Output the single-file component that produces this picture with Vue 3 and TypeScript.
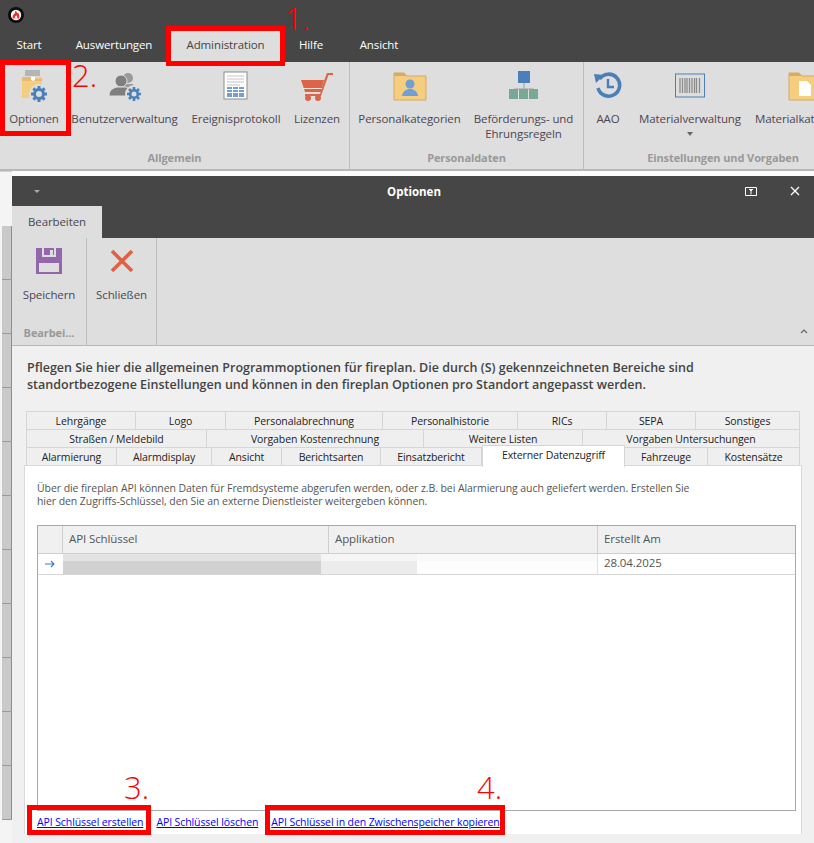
<template>
  <div class="page">
    <header class="topbar">
      <svg class="logo" width="16" height="16" viewBox="0 0 16 16">
        <circle cx="8" cy="8" r="8" fill="#0c0c0c" />
        <circle cx="8" cy="8" r="5.200" fill="#fff" />
        <path d="M4.800 11.500C4 8.800 5.500 7.800 6.500 6.800 7 5.600 7.300 4.800 7.600 3.500c1 1.200 1.300 2 1.700 2.800L10 5.500c1.300 2 1.800 3.800 1 6z" fill="#e8302a" />
        <path d="M6.800 11.500C6.500 10 7.400 9.500 8.300 8.300c.8 1.100 1.200 2 .9 3.200z" fill="#fff" />
      </svg>
      <nav class="menu">
        <div v-for="t in menuTabs" :key="t" class="menu-tab" :class="{ active: t === 'Administration' }">{{ t }}</div>
      </nav>
    </header>

    <section class="ribbon">
      <div class="rb-group g1">
        <div class="rb-items">
          <div class="rb-item" style="width: 68px">
            <svg class="ic" width="36" height="32" viewBox="0 0 36 32">
              <path d="M9 1h15M9 3h15M9 5h15" stroke="#8d8d8d" stroke-width="1" />
              <path d="M6 7h20v21H6z" fill="#f5cd7e" />
              <path d="M6 7h8l2 2h10v2H6z" fill="#e6bb6b" />
              <path d="M15 7h4v3l-2 1-2-1z" fill="#fff" />
              <circle cx="23" cy="24" r="10" fill="#dedede" />
              <g fill="none" stroke="#4a7fb9">
                <circle cx="23" cy="24" r="4.500" stroke-width="3" />
                <path d="M23 16v3M23 29v3M15 24h3M28 24h3M17.400 18.400l2.100 2.100M26.500 27.500l2.100 2.100M28.600 18.400l-2.100 2.100M19.500 27.500l-2.100 2.100" stroke-width="3" />
              </g>
            </svg>
            <span>Optionen</span>
          </div>
          <div class="rb-item" style="width: 113px">
            <svg class="ic" width="36" height="32" viewBox="0 0 36 32">
              <circle cx="21" cy="8" r="5" fill="#9a9a9a" />
              <path d="M16 14h10l4 6v4H18z" fill="#9a9a9a" />
              <circle cx="14" cy="11" r="6" fill="#7f7f7f" stroke="#dedede" />
              <path d="M2 26c0-6 4-8 8-9h8c4 1 7 3 8 9z" fill="#7f7f7f" stroke="#dedede" />
              <circle cx="27" cy="24" r="9" fill="#dedede" />
              <g fill="none" stroke="#4a7fb9">
                <circle cx="27" cy="24" r="3.800" stroke-width="2.600" />
                <path d="M27 17v2.500M27 28.500v2.500M20 24h2.500M31.500 24h2.500M22 19l1.800 1.800M30.200 27.200l1.800 1.800M32 19l-1.800 1.800M23.800 27.200L22 29" stroke-width="2.600" />
              </g>
            </svg>
            <span>Benutzerverwaltung</span>
          </div>
          <div class="rb-item" style="width: 110px">
            <svg class="ic" width="26" height="30" viewBox="0 0 26 30">
              <rect x="1" y="1" width="23" height="27" fill="#fff" stroke="#8c8c8c" />
              <path d="M4 5h17M4 8h17M4 11h17M4 14h13" stroke="#c4c4c4" />
              <path d="M4 17h17M4 20h17M4 23h17M4 25h17" stroke="#4a7fb9" stroke-width="1.600" />
              <path d="M9.500 16v10M15.500 16v10" stroke="#fff" />
            </svg>
            <span>Ereignisprotokoll</span>
          </div>
          <div class="rb-item" style="width: 52px">
            <svg class="ic" width="34" height="30" viewBox="0 0 34 30">
              <path d="M1 9h23l-3 12H5z" fill="#dd6547" />
              <path d="M24 10l3-8h6v2h-4.500L21 25H5v-2h15z" fill="#dd6547" />
              <rect x="3" y="17" width="19" height="1" fill="#fff" opacity=".8" />
              <circle cx="8" cy="27" r="3" fill="#dd6547" />
              <circle cx="18" cy="27" r="3" fill="#dd6547" />
            </svg>
            <span>Lizenzen</span>
          </div>
        </div>
        <div class="rb-label">Allgemein</div>
      </div>

      <div class="rb-group g2">
        <div class="rb-items pad">
          <div class="rb-item" style="width: 109px">
            <svg class="ic" width="34" height="30" viewBox="0 0 34 30">
              <path d="M1 2h10l3 3h19v24H1z" fill="#f5cd7e" stroke="#d6ab62" />
              <path d="M1 2h10l3 3H1z" fill="#d6ab62" />
              <circle cx="17" cy="13" r="4.500" fill="#6e9fd6" />
              <path d="M9 25c1-5 4-7 8-7s7 2 8 7z" fill="#6e9fd6" />
            </svg>
            <span>Personalkategorien</span>
          </div>
          <div class="rb-item" style="width: 119px">
            <svg class="ic" width="30" height="30" viewBox="0 0 30 30">
              <rect x="9" y="0" width="12" height="12" fill="#4a7fb9" />
              <path d="M15 12v6M5 21v-3h20v3M15 18v3" fill="none" stroke="#a0a0a0" />
              <rect x="0" y="18" width="9" height="10" fill="#78a896" />
              <rect x="10" y="18" width="9" height="10" fill="#78a896" />
              <rect x="20" y="18" width="9" height="10" fill="#78a896" />
            </svg>
            <span>Beförderungs- und<br />Ehrungsregeln</span>
          </div>
        </div>
        <div class="rb-label">Personaldaten</div>
      </div>

      <div class="rb-group g3">
        <div class="rb-items">
          <div class="rb-item" style="width: 48px">
            <svg class="ic" width="28" height="30" viewBox="0 0 28 30">
              <path d="M5.500 8a11 11 0 1 1-1.500 9" fill="none" stroke="#4a7fb9" stroke-width="3.600" />
              <path d="M0 3l10 1-8 8z" fill="#4a7fb9" />
              <path d="M14 8v8h6" fill="none" stroke="#4a7fb9" stroke-width="2.400" />
            </svg>
            <span>AAO</span>
          </div>
          <div class="rb-item" style="width: 116px">
            <svg class="ic" width="30" height="30" viewBox="0 0 30 30">
              <rect x=".5" y="3" width="29" height="23" fill="none" stroke="#4a7fb9" />
              <path d="M5 7v15M7.500 7v15M10 7v15M12 7v15M14.500 7v15M17 7v15M19.500 7v15M21.500 7v15M24.500 7v15" stroke="#8c8c8c" stroke-width="1.300" />
            </svg>
            <span>Materialverwaltung</span>
            <i class="caret"></i>
          </div>
          <div class="rb-item clip">
            <svg class="ic" width="34" height="30" viewBox="0 0 34 30">
              <path d="M1 2h10l3 3h19v24H1z" fill="#f5cd7e" stroke="#d6ab62" />
              <path d="M1 2h10l3 3H1z" fill="#d6ab62" />
              <path d="M11 10h8l4 4v11H11z" fill="#fff" />
            </svg>
            <span>Materialkategorien</span>
          </div>
        </div>
        <div class="rb-label">Einstellungen und Vorgaben</div>
      </div>
    </section>

    <div class="workspace">
      <aside class="backdrop">
        <div v-for="n in 11" :key="n" class="back-row"></div>
      </aside>

      <main class="window">
        <div class="win-head">
          <div class="win-title">
            <i class="win-caret"></i>
            <b>Optionen</b>
            <svg class="win-max" width="12" height="9" viewBox="0 0 12 9">
              <path d="M.5.5h11v8H.5z" fill="none" stroke="#fff" />
              <path d="M4 2.500h4M6 2.500v5M5 3.500h2" stroke="#fff" />
            </svg>
            <svg class="win-close" width="10" height="10" viewBox="0 0 10 10">
              <path d="M1 1l8 8M9 1L1 9" stroke="#fff" stroke-width="1.300" />
            </svg>
          </div>
          <div class="win-tab">Bearbeiten</div>
        </div>

        <div class="win-ribbon">
          <div class="wr-group wr1">
            <div class="rb-item wr-item">
              <svg class="ic" width="26" height="26" viewBox="0 0 26 26">
                <path d="M0 0h26v26H0z" fill="#9467ad" />
                <rect x="3" y="15" width="20" height="9" fill="#dedede" />
                <rect x="6" y="0" width="14" height="9" fill="#dedede" />
                <rect x="8" y="0" width="10" height="7" fill="#9467ad" />
                <rect x="14" y="2" width="3" height="5" fill="#dedede" />
              </svg>
              <span>Speichern</span>
            </div>
            <div class="rb-label">Bearbei...</div>
          </div>
          <div class="wr-group wr2">
            <div class="rb-item wr-item">
              <svg class="ic" width="26" height="26" viewBox="0 0 26 26">
                <path d="M3 3l20 20M23 3L3 23" stroke="#df6243" stroke-width="3.600" />
              </svg>
              <span>Schließen</span>
            </div>
          </div>
          <svg class="collapse" width="8" height="5" viewBox="0 0 8 5"><path d="M1 4l3-3 3 3" fill="none" stroke="#666" stroke-width="1.200" /></svg>
        </div>

        <div class="win-body">
          <p class="intro">
            Pflegen Sie hier die allgemeinen Programmoptionen für fireplan. Die durch (S) gekennzeichneten Bereiche sind<br />
            standortbezogene Einstellungen und können in den fireplan Optionen pro Standort angepasst werden.
          </p>

          <div class="tabs">
            <div v-for="(row, i) in tabRows" :key="i" class="tab-row" :style="{ gridTemplateColumns: row.cols }">
              <div v-for="t in row.items" :key="t" class="tab" :class="{ on: t === 'Externer Datenzugriff' }">{{ t }}</div>
            </div>
          </div>

          <div class="panel">
            <p class="desc">
              Über die fireplan API können Daten für Fremdsysteme abgerufen werden, oder z.B. bei Alarmierung auch geliefert werden. Erstellen Sie<br />
              hier den Zugriffs-Schlüssel, den Sie an externe Dienstleister weitergeben können.
            </p>

            <div class="grid">
              <div class="g-head">
                <div></div>
                <div>API Schlüssel</div>
                <div>Applikation</div>
                <div>Erstellt Am</div>
              </div>
              <div class="g-row">
                <div class="g-arrow">
                  <svg width="10" height="8" viewBox="0 0 10 8"><path d="M0 4h9M6 1l3 3-3 3" fill="none" stroke="#3a78cf" stroke-width="1.100" /></svg>
                </div>
                <div class="g-key">
                  <i class="blur b1"></i><i class="blur b2"></i><i class="blur b3"></i>
                </div>
                <div class="g-date">28.04.2025</div>
              </div>
            </div>

            <div class="links">
              <a>API Schlüssel erstellen</a>
              <a>API Schlüssel löschen</a>
              <a>API Schlüssel in den Zwischenspeicher kopieren</a>
            </div>
          </div>
        </div>
      </main>
    </div>

    <!-- rote Markierungen liegen ueber dem Screenshot -->
    <div class="mark" style="left: 166px; top: 26px; width: 119px; height: 40px"></div>
    <div class="mark" style="left: 0; top: 60px; width: 71px; height: 76px"></div>
    <div class="mark" style="left: 27px; top: 805px; width: 124px; height: 30px"></div>
    <div class="mark" style="left: 265px; top: 805px; width: 240px; height: 30px"></div>
    <span class="num" style="left: 285px; top: 3px">1.</span>
    <span class="num" style="left: 72px; top: 60px">2.</span>
    <span class="num" style="left: 124px; top: 772px">3.</span>
    <span class="num" style="left: 477px; top: 772px">4.</span>
  </div>
</template>

<script setup lang="ts">
interface TabRow {
  cols: string
  items: string[]
}

const menuTabs = ['Start', 'Auswertungen', 'Administration', 'Hilfe', 'Ansicht']

// Spaltenbreiten wie im Original, die Reiter fuellen jede Zeile ganz aus
const tabRows: TabRow[] = [
  {
    cols: '110px 90px 157px 135px 89px 89px 104px',
    items: ['Lehrgänge', 'Logo', 'Personalabrechnung', 'Personalhistorie', 'RICs', 'SEPA', 'Sonstiges']
  },
  {
    cols: '181px 217px 159px 217px',
    items: ['Straßen / Meldebild', 'Vorgaben Kostenrechnung', 'Weitere Listen', 'Vorgaben Untersuchungen']
  },
  {
    cols: '91px 95px 70px 99px 101px 143px 83px 92px',
    items: ['Alarmierung', 'Alarmdisplay', 'Ansicht', 'Berichtsarten', 'Einsatzbericht', 'Externer Datenzugriff', 'Fahrzeuge', 'Kostensätze']
  }
]
</script>

<style>
html,
body {
  margin: 0;
  background: #f0f0f0;
}
</style>

<style scoped>
.page {
  position: relative;
  width: 814px;
  height: 843px;
  overflow: hidden;
  display: flex;
  flex-direction: column;
  font-family: "Open Sans", "Noto Sans", sans-serif;
  font-size: 11.5px;
  letter-spacing: -0.1px;
  color: #444;
  background: #f0f0f0;
}
.topbar {
  height: 62px;
  background: #464646;
  display: flex;
  flex-direction: column;
  flex: none;
}
.logo {
  margin: 7px 0 0 8px;
}
.menu {
  display: grid;
  grid-template-columns: 58px 112px 111px 60px 76px;
  margin-top: 6px;
}
.menu-tab {
  height: 33px;
  line-height: 32px;
  color: #fff;
  text-align: center;
}
.menu-tab.active {
  background: #dedede;
  color: #444;
}
.ribbon {
  height: 107px;
  flex: none;
  display: flex;
  background: #dedede;
  border-bottom: 2px solid #b8b8b8;
  overflow: hidden;
}
.rb-group {
  display: flex;
  flex-direction: column;
  box-sizing: border-box;
  flex: none;
  border-right: 1px solid #bdbdbd;
}
.g1 {
  width: 350px;
}
.g2 {
  width: 234px;
}
.g3 {
  flex: 1;
  min-width: 0;
  border-right: 0;
}
.g3 .rb-label {
  padding-left: 48px;
}
.rb-items {
  display: flex;
  height: 88px;
}
.rb-items.pad {
  padding-left: 5px;
}
.rb-item {
  display: flex;
  flex-direction: column;
  align-items: center;
  flex: none;
  text-align: center;
  line-height: 15px;
  color: #4c4652;
}
.rb-item .ic {
  margin-top: 8px;
  height: 32px;
  margin-bottom: 9px;
}
.rb-item.clip {
  align-items: flex-start;
  padding-left: 7px;
  white-space: nowrap;
}
.rb-item.clip .ic {
  margin-left: 33px;
}
.caret {
  margin-top: 6px;
  border: 3px solid transparent;
  border-top: 4px solid #666;
}
.rb-label {
  text-align: center;
  font-size: 11px;
  font-weight: 700;
  color: #999;
  line-height: 16px;
}
.workspace {
  flex: 1;
  display: flex;
  min-height: 0;
  background: #fbfbfb;
}
.backdrop {
  width: 12px;
  flex: none;
  padding-top: 54px;
  background: #f4f4f4;
  border-top: 1px solid #d0d0d0;
}
.back-row {
  height: 53px;
  margin-left: 2px;
  background: #c9c9c9;
  border-bottom: 1px solid #9a9a9a;
  border-right: 1px solid #8f8f8f;
}
.window {
  flex: 1;
  min-width: 0;
  margin-top: 5px;
  display: flex;
  flex-direction: column;
}
.win-head {
  height: 62px;
  flex: none;
  background: #464646;
  color: #fff;
  display: flex;
  flex-direction: column;
}
.win-title {
  height: 30px;
  display: flex;
  align-items: center;
  position: relative;
}
.win-title b {
  position: absolute;
  left: 375px;
  font-size: 11.5px;
  letter-spacing: 0;
}
.win-caret {
  margin-left: 22px;
  border: 3px solid transparent;
  border-top: 3px solid #aaa;
  margin-top: 3px;
}
.win-max {
  position: absolute;
  left: 733px;
}
.win-close {
  position: absolute;
  left: 778px;
}
.win-tab {
  width: 90px;
  height: 32px;
  line-height: 31px;
  text-align: center;
  background: #dedede;
  color: #4c4652;
}
.win-ribbon {
  height: 107px;
  flex: none;
  display: flex;
  position: relative;
  background: #dedede;
  border-bottom: 1px solid #b8b8b8;
}
.wr-group {
  display: flex;
  flex-direction: column;
  border-right: 1px solid #bdbdbd;
  height: 107px;
}
.wr1 {
  width: 74px;
}
.wr2 {
  width: 69px;
}
.wr-item {
  height: 87px;
}
.wr-item .ic {
  margin-top: 10px;
  margin-bottom: 13px;
  height: 26px;
}
.collapse {
  position: absolute;
  right: 6px;
  bottom: 11px;
}
.win-body {
  flex: 1;
  min-height: 0;
  padding: 13px 12px 0;
  display: flex;
  flex-direction: column;
  background: #f0f0f0;
}
.intro {
  margin: 0 0 18px 3px;
  font-size: 12.5px;
  font-weight: 600;
  letter-spacing: 0;
  line-height: 17px;
  color: #444;
}
.tabs {
  display: flex;
  flex-direction: column;
  padding: 0 2px;
}
.tab-row {
  display: grid;
  height: 18px;
}
.tab {
  line-height: 18px;
  text-align: center;
  background: #efefef;
  border: solid #d6d6d6;
  border-width: 1px 1px 0 0;
  color: #222;
  font-size: 10.5px;
  white-space: nowrap;
}
.tab:first-child {
  border-left: 1px solid #d6d6d6;
}
.tab.on {
  background: #fff;
  height: 21px;
  margin-top: -2px;
  position: relative;
  border-left: 1px solid #d6d6d6;
  z-index: 1;
}
.panel {
  width: 778px;
  height: 369px;
  box-sizing: border-box;
  background: #fff;
  border: 1px solid #d9d9d9;
  border-bottom: 0;
  padding: 16px 0 0 12px;
  display: flex;
  flex-direction: column;
  margin-bottom: 9px;
}
.desc {
  margin: 0 0 17px;
  font-size: 10.5px;
  letter-spacing: -0.07px;
  line-height: 13px;
  color: #555;
  white-space: nowrap;
}
.grid {
  width: 759px;
  height: 286px;
  flex: none;
  box-sizing: border-box;
  border: 1px solid #a9a9a9;
}
.g-head,
.g-row {
  display: grid;
  grid-template-columns: 24px 266px 269px 1fr;
}
.g-head {
  height: 27px;
  background: #f0f0f0;
  border-bottom: 1px solid #cfcfcf;
}
.g-head div {
  line-height: 25px;
  padding-left: 6px;
  border-left: 1px solid #cfcfcf;
  color: #555;
}
.g-head div:first-child {
  border-left: 0;
}
.g-row {
  grid-template-columns: 24px 535px 1fr;
  height: 20px;
  border-bottom: 1px solid #d6d6d6;
}
.g-arrow {
  display: flex;
  align-items: center;
  justify-content: center;
}
.g-key {
  display: flex;
  height: 20px;
}
.blur {
  display: block;
  height: 20px;
}
.b1 {
  width: 258px;
  margin-left: 1px;
  background: linear-gradient(#e3e3e3 7px, #d1d1d1 7px);
}
.b2 {
  width: 96px;
  background: linear-gradient(#f5f5f5 7px, #ebeceb 7px);
}
.b3 {
  flex: 1;
  background: linear-gradient(#f9f9f9 7px, #fdfdfd 7px);
}
.g-date {
  line-height: 18px;
  padding-left: 6px;
  border-left: 1px solid #e0e0e0;
  color: #555;
}
.links {
  display: flex;
  gap: 13px;
  margin-top: 4px;
  font-size: 10.5px;
  line-height: 14px;
}
.links a {
  color: #0000ff;
  text-decoration: underline;
  white-space: nowrap;
}
.mark {
  position: absolute;
  box-sizing: border-box;
  border: 5px solid #ff0000;
  pointer-events: none;
}
.num {
  position: absolute;
  color: #ff0000;
  font-family: "Open Sans", sans-serif;
  font-weight: 300;
  font-size: 31px;
  line-height: 30px;
  letter-spacing: 0;
}
</style>
